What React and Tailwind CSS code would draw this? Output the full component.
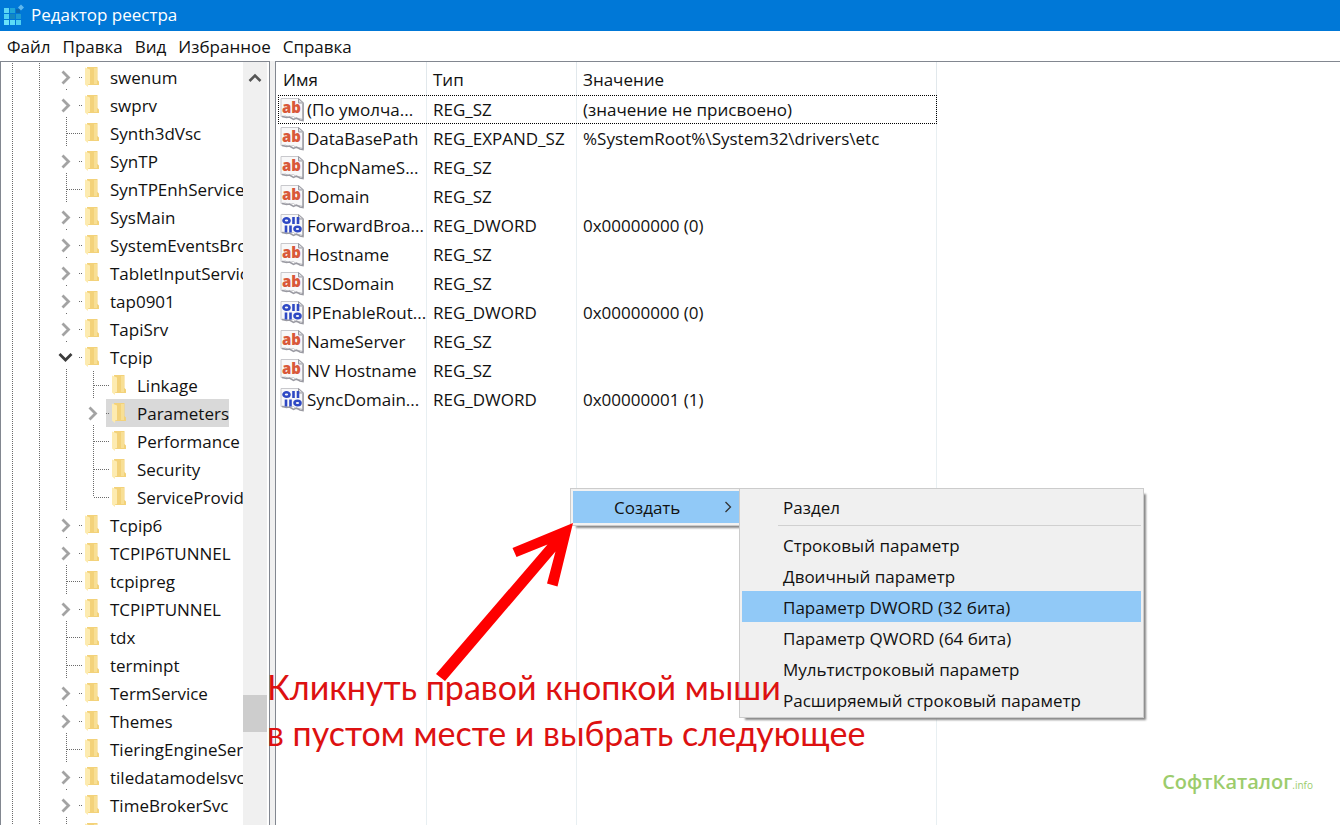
import React from 'react';

const TREE = [
    { name: 'swenum', state: 'closed' },
    { name: 'swprv', state: 'closed' },
    { name: 'Synth3dVsc' },
    { name: 'SynTP', state: 'closed' },
    { name: 'SynTPEnhService' },
    { name: 'SysMain', state: 'closed' },
    { name: 'SystemEventsBroker', state: 'closed' },
    { name: 'TabletInputService', state: 'closed' },
    { name: 'tap0901', state: 'closed' },
    { name: 'TapiSrv', state: 'closed' },
    { name: 'Tcpip', state: 'open' },
    { name: 'Linkage', child: true },
    { name: 'Parameters', child: true, state: 'closed', selected: true },
    { name: 'Performance', child: true },
    { name: 'Security', child: true },
    { name: 'ServiceProvider', child: true, last: true },
    { name: 'Tcpip6', state: 'closed' },
    { name: 'TCPIP6TUNNEL', state: 'closed' },
    { name: 'tcpipreg' },
    { name: 'TCPIPTUNNEL', state: 'closed' },
    { name: 'tdx' },
    { name: 'terminpt' },
    { name: 'TermService', state: 'closed' },
    { name: 'Themes', state: 'closed' },
    { name: 'TieringEngineService' },
    { name: 'tiledatamodelsvc', state: 'closed' },
    { name: 'TimeBrokerSvc', state: 'closed' },
    { name: '' },
];

const VALUES = [
    { name: '(По умолча...', type: 'REG_SZ', value: '(значение не присвоено)', focused: true },
    { name: 'DataBasePath', type: 'REG_EXPAND_SZ', value: '%SystemRoot%\\System32\\drivers\\etc' },
    { name: 'DhcpNameS...', type: 'REG_SZ', value: '' },
    { name: 'Domain', type: 'REG_SZ', value: '' },
    { name: 'ForwardBroa...', type: 'REG_DWORD', value: '0x00000000 (0)' },
    { name: 'Hostname', type: 'REG_SZ', value: '' },
    { name: 'ICSDomain', type: 'REG_SZ', value: '' },
    { name: 'IPEnableRout...', type: 'REG_DWORD', value: '0x00000000 (0)' },
    { name: 'NameServer', type: 'REG_SZ', value: '' },
    { name: 'NV Hostname', type: 'REG_SZ', value: '' },
    { name: 'SyncDomain...', type: 'REG_DWORD', value: '0x00000001 (1)' },
];

const MENU = ['Файл', 'Правка', 'Вид', 'Избранное', 'Справка'];

const NEW_ITEMS = [
    'Строковый параметр',
    'Двоичный параметр',
    'Параметр DWORD (32 бита)',
    'Параметр QWORD (64 бита)',
    'Мультистроковый параметр',
    'Расширяемый строковый параметр',
];

const AppIcon = () => (
    <svg width="22" height="24" viewBox="0 0 22 24" aria-hidden="true">
        <rect x="0" y="4" width="5" height="5" fill="#5cd6f5" />
        <rect x="6" y="4" width="5" height="5" fill="#1fa5d8" />
        <rect x="12" y="5" width="4" height="4" fill="#0b66b0" />
        <rect x="0" y="10" width="5" height="5" fill="#4fd0f2" />
        <rect x="6" y="10" width="5" height="5" fill="#1487c0" />
        <rect x="12" y="10" width="5" height="5" fill="#1f9bd2" />
        <rect x="0" y="16" width="5" height="5" fill="#6ae4fa" />
        <rect x="6" y="16" width="5" height="5" fill="#5cdcf7" />
        <rect x="12" y="16" width="5" height="5" fill="#4fd0f2" />
        <path d="M17 0.500l3 3-3 3-3-3z" fill="#5fb8ee" />
    </svg>
);

const Dots = ({ d }) => (
    <path d={d} stroke="#6b6b6b" strokeDasharray="1 1" fill="none" shapeRendering="crispEdges" />
);

const Guide = () => (
    <svg width="27" height="28" className="shrink-0" aria-hidden="true">
        <Dots d="M11.500 0V28" />
    </svg>
);

// Last guide before the folder: branch line or expander arrow
const Branch = ({ state, last }) => (
    <svg width="24" height="28" className="shrink-0" aria-hidden="true">
        {state ? <Dots d="M11.500 26V28" /> : <Dots d={last ? 'M11.500 0V14' : 'M11.500 0V28'} />}
        {state ? <Dots d="M23.500 14.500H24" /> : <Dots d="M12 14.500H24" />}
        {state === 'closed' && <path d="M7.500 8.500l6 6-6 6" stroke="#a3a3a3" strokeWidth="2.800" fill="none" />}
        {state === 'open' && <path d="M4.500 11l6 6 6-6" stroke="#3c3c3c" strokeWidth="2.800" fill="none" />}
    </svg>
);

const Folder = () => (
    <svg width="21" height="28" viewBox="0 0 21 28" className="shrink-0" aria-hidden="true">
        <Dots d="M0 14.500H4" />
        <path d="M8 4h10.500v13l1.500 1.500V22H8z" fill="#f3d27a" />
        <path d="M15 5h3v16h-3z" fill="#f8df95" />
        <path d="M6 4.500l5 2V21l-2 .500v2.500l-3-2.500z" fill="#fdebb0" />
    </svg>
);

const TreeRow = ({ node }) => (
    <li className="flex h-7">
        <Guide />
        <Guide />
        {node.child && <Guide />}
        <Branch state={node.state} last={node.last} />
        <button className={`flex items-center gap-[10px] whitespace-nowrap ${node.selected ? 'bg-[#d9d9d9]' : ''}`}>
            <Folder />
            <span className="pt-0.5">{node.name}</span>
        </button>
    </li>
);

const Sheet = () => (
    <>
        <path d="M1 1.500h17.500l5 4.500v17l-3-1.500-4 .5-3-2.500-5 1-3-1.500-4.500.500z" fill="#f8f8f9" stroke="#c8c8cc" />
        <path d="M2 19.500l4.500 1 3-.5 4 2.500 3-1.500 3.500 2 3 .500V6.500" fill="none" stroke="#9a9aa2" strokeWidth="1.500" />
        <path d="M18.500 1.500V6h5z" fill="#dcdce0" stroke="#9a9aa2" />
    </>
);

const StringIcon = () => (
    <svg width="25" height="25" viewBox="0 0 25 25" className="shrink-0" aria-hidden="true">
        <Sheet />
        <text x="2" y="16" fontSize="15" fontWeight="800" fill="#d9583a" fontFamily="Open Sans, sans-serif">ab</text>
    </svg>
);

const BinaryIcon = () => (
    <svg width="25" height="25" viewBox="0 0 25 25" className="shrink-0" aria-hidden="true">
        <Sheet />
        <g stroke="#2f49c4" strokeWidth="2.600" fill="none">
            <ellipse cx="6.500" cy="7.500" rx="3" ry="2.200" />
            <path d="M13.500 4v7M18 4v7M6 12.500v7M10.500 12.500v7" />
            <ellipse cx="17.500" cy="16" rx="3" ry="2.200" />
        </g>
    </svg>
);

const ValueRow = ({ row }) => (
    <tr className={`h-[29px] ${row.focused ? 'outline-1 -outline-offset-1 outline-dotted outline-black' : ''}`}>
        <td className="border-r border-[#e8eff2] pl-0.5">
            <div className="flex items-center gap-0.5 whitespace-nowrap">
                {row.type === 'REG_DWORD' ? <BinaryIcon /> : <StringIcon />}
                {row.name}
            </div>
        </td>
        <td className="border-r border-[#e8eff2] pl-1.5">{row.type}</td>
        <td className="border-r border-[#e8eff2] pl-1.5">{row.value}</td>
    </tr>
);

const MenuItem = ({ label, active }) => (
    <button
        className={`h-[31px] w-full pt-0.5 pl-[41px] text-left whitespace-nowrap ${active ? 'bg-[#91c9f7]' : ''}`}
    >
        {label}
    </button>
);

const App = () => {
    return (
        <div className="relative flex h-screen flex-col overflow-hidden bg-white font-['Open_Sans','Noto_Sans',sans-serif] text-[17px] leading-6 text-[#111]">
            {/* Title bar */}
            <header className="flex h-[31px] shrink-0 items-center gap-[5px] bg-[#0078d7] pl-1 text-white">
                <AppIcon />
                <h1 className="pb-0.5">Редактор реестра</h1>
            </header>

            <nav className="flex h-[30px] shrink-0 items-center gap-3 pt-0.5 pl-[7px]">
                {MENU.map((item) => (
                    <button key={item}>{item}</button>
                ))}
            </nav>

            <main className="flex min-h-0 flex-1 bg-[#f0f0f0]">
                {/* Keys */}
                <aside className="flex w-[270px] shrink-0 border-x border-t border-[#828790] bg-white">
                    <ul className="min-w-0 flex-1 overflow-hidden pt-px">
                        {TREE.map((node) => (
                            <TreeRow key={node.name} node={node} />
                        ))}
                    </ul>
                    <div className="mr-0.5 flex w-6 shrink-0 flex-col bg-[#f0f0f0]">
                        <button aria-label="Вверх" className="flex h-8 items-center justify-center">
                            <svg width="14" height="10" viewBox="0 0 14 10" aria-hidden="true">
                                <path d="M1.500 8l5.500-5.500 5.500 5.500" stroke="#555" strokeWidth="2.500" fill="none" />
                            </svg>
                        </button>
                        <div className="flex-[600]" />
                        <div className="h-[37px] bg-[#cdcdcd]" />
                        <div className="flex-[93]" />
                    </div>
                </aside>

                {/* Values */}
                <section className="ml-[5px] min-w-0 flex-1 border-t border-l border-[#828790] bg-white pl-0.5">
                    <table className="h-full w-[659px] table-fixed border-separate border-spacing-0">
                        <colgroup>
                            <col className="w-[149px]" />
                            <col className="w-[150px]" />
                            <col className="w-[360px]" />
                        </colgroup>
                        <thead>
                            <tr className="h-[33px] text-left">
                                <th className="border-r border-[#e1e8ec] pt-0.5 pl-[5px] font-normal">Имя</th>
                                <th className="border-r border-[#e1e8ec] pt-0.5 pl-1.5 font-normal">Тип</th>
                                <th className="border-r border-[#e1e8ec] pt-0.5 pl-1.5 font-normal">Значение</th>
                            </tr>
                        </thead>
                        <tbody>
                            {VALUES.map((row) => (
                                <ValueRow key={row.name} row={row} />
                            ))}
                            <tr>
                                <td className="border-r border-[#e8eff2]" />
                                <td className="border-r border-[#e8eff2]" />
                                <td className="border-r border-[#e8eff2]" />
                            </tr>
                        </tbody>
                    </table>
                </section>
            </main>

            {/* Context menu */}
            <div className="absolute top-[488px] left-[570px] w-[172px] border border-[#ccc] bg-[#f2f2f2] p-0.5 shadow-[4px_4px_2px_-2px_#888]">
                <button className="flex h-[32px] w-full items-center justify-between bg-[#91c9f7] pr-[7px] pl-[41px]">
                    <span className="pt-0.5">Создать</span>
                    <svg width="8" height="12" viewBox="0 0 8 12" aria-hidden="true">
                        <path d="M1.500 1l5 5-5 5" stroke="#333" strokeWidth="1.300" fill="none" />
                    </svg>
                </button>
            </div>
            <div className="absolute top-[488px] left-[739px] w-[405px] border border-[#ccc] bg-[#f0f0f0] p-0.5 shadow-[4px_4px_2px_-2px_#888]">
                <MenuItem label="Раздел" />
                <hr className="my-[3px] ml-9 border-[#d0d0d0]" />
                {NEW_ITEMS.map((label, idx) => (
                    <MenuItem key={label} label={label} active={idx === 2} />
                ))}
            </div>

            {/* Annotation */}
            <svg className="absolute top-[520px] left-[430px]" width="150" height="165" viewBox="0 0 150 165" aria-hidden="true">
                <path d="M143 3L82.500 28l4 9L117.500 24.500 6 154l9 7L125.500 31.500l-8.500 32 10.500 3z" fill="#fe0000" />
            </svg>
            <p className="absolute top-[664px] left-[267px] font-['Lato','Open_Sans',sans-serif] text-[34px] leading-[46px] whitespace-nowrap text-[#dd1111]">
                Кликнуть правой кнопкой мыши
                <br />
                в пустом месте и выбрать следующее
            </p>

            <a href="#" className="absolute right-[27px] bottom-7 flex items-baseline font-semibold text-[#9ccc6c]">
                <span className="text-xl">СофтКаталог</span>
                <span className="text-[10px] font-normal">.info</span>
            </a>
        </div>
    );
};

export default App;
